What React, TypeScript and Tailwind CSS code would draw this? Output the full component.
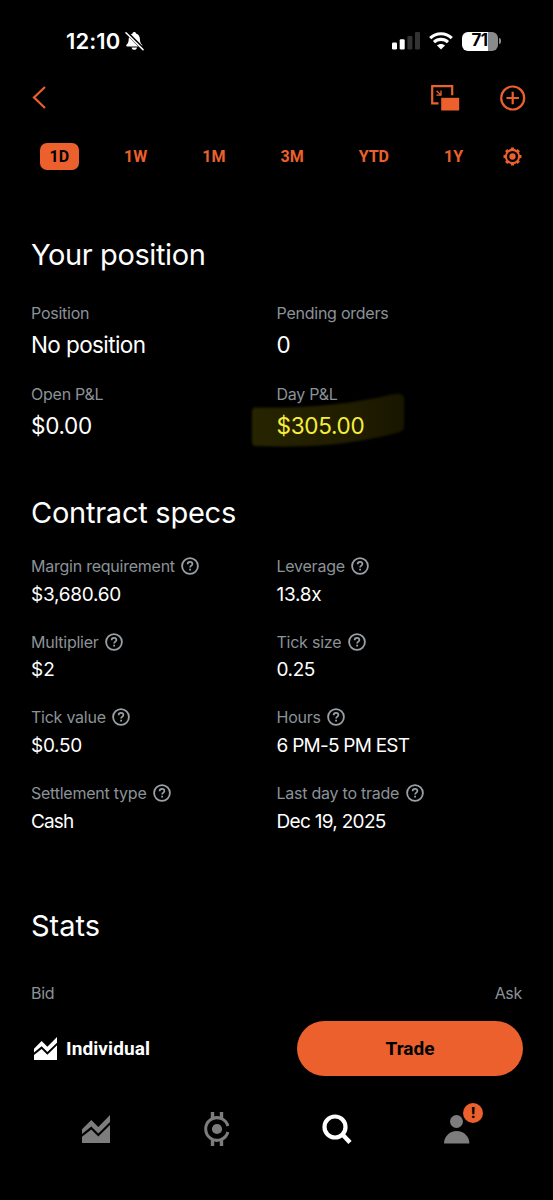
import { clsx } from "clsx";

const ranges = [
  { label: "1D", active: true },
  { label: "1W" },
  { label: "1M" },
  { label: "3M" },
  { label: "YTD" },
  { label: "1Y" },
];

const position = [
  { label: "Position", value: "No position", tracking: "tracking-[-0.6px]" },
  { label: "Pending orders", value: "0" },
  { label: "Open P&L", value: "$0.00", tracking: "tracking-[-0.3px]" },
  { label: "Day P&L", value: "$305.00", tracking: "tracking-[-0.3px]", marked: true },
];

const specs = [
  { label: "Margin requirement", value: "$3,680.60", tracking: "tracking-[-0.25px]" },
  { label: "Leverage", value: "13.8x", tracking: "tracking-[-0.3px]" },
  { label: "Multiplier", value: "$2" },
  { label: "Tick size", value: "0.25", tracking: "tracking-[-0.4px]" },
  { label: "Tick value", value: "$0.50", tracking: "tracking-[-0.3px]" },
  { label: "Hours", value: "6 PM-5 PM EST", tracking: "tracking-[-0.75px]" },
  { label: "Settlement type", value: "Cash", tracking: "tracking-[-0.9px]" },
  { label: "Last day to trade", value: "Dec 19, 2025", tracking: "tracking-[-0.7px]" },
];

function BellOff() {
  return (
    <svg width="19" height="20" viewBox="0 0 19 20" fill="none">
      <path
        d="M9.3 1c-.9 0-1.6.6-1.7 1.4C5.200 3.200 3.700 5.200 3.700 8c0 3.200-.8 4.400-2 5.500-.8.800-.5 2 .6 2h14c1.100 0 1.400-1.200.6-2-1.200-1.100-2-2.300-2-5.500 0-2.800-1.500-4.800-3.900-5.600C10.900 1.600 10.200 1 9.300 1Z"
        fill="#fff"
      />
      <path d="M6.600 16.500h5.400c-.2 1.400-1.300 2.300-2.700 2.300s-2.500-.9-2.700-2.300Z" fill="#fff" />
      <path d="M1.600 1.400 18.400 18.200" stroke="#000" strokeWidth="3.400" />
      <path d="M1 1.800 18 18.600" stroke="#fff" strokeWidth="1.500" strokeLinecap="round" />
    </svg>
  );
}

function Signal() {
  return (
    <svg width="28" height="18" viewBox="0 0 28 18">
      <rect x="0" y="10.500" width="5" height="7" rx="1.200" fill="#fff" />
      <rect x="7.700" y="7.300" width="5" height="10.200" rx="1.200" fill="#fff" />
      <rect x="15.400" y="4" width="5" height="13.500" rx="1.200" fill="#333" />
      <rect x="23" y="0" width="5" height="17.500" rx="1.200" fill="#333" />
    </svg>
  );
}

function Wifi() {
  return (
    <svg width="24" height="18" viewBox="0 0 24 18" fill="none" stroke="#fff" strokeWidth="3.100">
      <path d="M1.200 6.200C7.300.2 16.700.2 22.800 6.200" />
      <path d="M5 10.200c4-3.800 10-3.800 14 0" />
      <path d="M12 17.600 8 13.500c2.300-2 5.700-2 8 0Z" fill="#fff" stroke="none" />
    </svg>
  );
}

function Battery() {
  return (
    <div className="flex items-center gap-[1px]">
      <div className="flex h-[19px] w-[36px] items-center justify-center rounded-[6px] bg-[linear-gradient(90deg,#fff_71%,#8a8a8a_71%)] pr-px text-[17px] font-bold tracking-[-0.6px] text-black">
        71
      </div>
      <div className="h-[6px] w-[2px] rounded-r-full bg-[#8a8a8a]" />
    </div>
  );
}

function Pip() {
  return (
    <svg width="29" height="26" viewBox="0 0 29 26" fill="none" stroke="#eb602c">
      <path d="M7.500 18.300H1.200V1.200h20v9" strokeWidth="2.200" />
      <path d="M5.600 5.800 9.200 9.400M10 5.600v4.600H5.400" strokeWidth="1.300" />
      <path d="M10.200 12.800h18v12.700h-18z" fill="#eb602c" stroke="none" />
    </svg>
  );
}

function Gear() {
  return (
    <svg width="19" height="19" viewBox="0 0 18 18" fill="none" stroke="#eb602c">
      <circle cx="9" cy="9" r="6.300" strokeWidth="2" />
      {[0, 45, 90, 135, 180, 225, 270, 315].map((deg) => (
        <path key={deg} d="M9 2.600V.5" strokeWidth="3" transform={`rotate(${deg} 9 9)`} />
      ))}
      <circle cx="9" cy="9" r="3" fill="#eb602c" stroke="none" />
    </svg>
  );
}

function Help() {
  return (
    <svg width="18" height="18" viewBox="0 0 18 18" fill="none" stroke="#9aa0a6">
      <circle cx="9" cy="9" r="7.900" strokeWidth="1.800" />
      <path d="M6.600 7.300c0-1.500 1-2.400 2.400-2.400s2.400.9 2.400 2.100c0 1.700-2.300 1.700-2.300 3.600" strokeWidth="1.700" />
      <path d="M8.200 11.700h1.800v1.700H8.200z" fill="#9aa0a6" stroke="none" />
    </svg>
  );
}

function ChartIcon({ size, color }: { size: number; color: string }) {
  return (
    <svg width={size} height={size} viewBox="0 0 28 28" fill={color}>
      <path d="M0 14.200 9.300 4.900l7 7L28 0v7L16.300 18.400 9.300 11.400 0 19Z" />
      <path d="M0 21.800 9.300 14.600l7 7L28 10V28H0Z" />
    </svg>
  );
}

function CryptoIcon() {
  return (
    <svg width="26" height="34" viewBox="0 0 26 34" fill="none" stroke="#7d7d7d">
      <path d="M23.900 14A11.300 11.300 0 1 0 23.900 20" strokeWidth="3" />
      <path d="M8.500 0v7M17.500 0v7M8.500 34v-7M17.500 34v-7" strokeWidth="3.400" />
      <circle cx="13" cy="17" r="5.100" fill="#7d7d7d" stroke="none" />
    </svg>
  );
}

type FieldProps = {
  label: string;
  value: string;
  tracking?: string;
  help?: boolean;
  marked?: boolean;
};

function Field({ label, value, tracking, help, marked }: FieldProps) {
  return (
    <div className="relative">
      {/* Highlighter stroke behind the value */}
      {marked && (
        <svg className="absolute top-[8px] left-[-30px] blur-[1px]" width="162" height="60" viewBox="0 0 162 60">
          <defs>
            <linearGradient id="marker" x1="0" x2="1" y1="0" y2="0">
              <stop offset="0" stopColor="#272400" />
              <stop offset="0.6" stopColor="#211e00" />
              <stop offset="1" stopColor="#191600" />
            </linearGradient>
          </defs>
          <path
            d="M9 17.500C60 19 104 14 145 4.500c9-2 12 0 12 5v26c0 5-2 6-8 7.500C108 54 66 58 9 56c-3 0-4-2-4-5V22c0-3 1-4.500 4-4.500Z"
            fill="url(#marker)"
          />
        </svg>
      )}
      <div className="relative flex h-6 items-center gap-[6.500px] text-[16px] tracking-[-0.24px] text-[#8b9298]">
        {label}
        {help && <Help />}
      </div>
      <div
        className={clsx(
          "relative flex items-center",
          help ? "mt-0.5 h-7 pt-0.5 text-[19px]" : "mt-1 h-[30px] pt-px text-[22.500px]",
          marked ? "text-[#f6ee3c]" : "text-white",
          tracking
        )}
      >
        {value}
      </div>
    </div>
  );
}

export default function App() {
  return (
    <div className="flex h-[1200px] w-[553px] flex-col overflow-hidden bg-black font-['Inter',sans-serif] text-white">
      {/* Status bar */}
      <div className="flex h-[82px] shrink-0 items-center pr-[52px] pl-[66px]">
        <span className="text-[22px] font-semibold tracking-[0.1px]">12:10</span>
        <span className="ml-[5px]">
          <BellOff />
        </span>
        <div className="ml-auto flex items-center gap-[9px]">
          <Signal />
          <Wifi />
          <Battery />
        </div>
      </div>

      {/* Header */}
      <div className="flex h-[31px] shrink-0 items-center pr-[27px] pl-8">
        <svg width="14" height="24" viewBox="0 0 14 24" fill="none" stroke="#eb602c" strokeWidth="2.200">
          <path d="M13 1 2 11.500l11 10.500" />
        </svg>
        <div className="ml-auto flex items-center gap-10 pt-px">
          <Pip />
          <svg width="26" height="26" viewBox="0 0 26 26" fill="none" stroke="#eb602c" strokeWidth="2.200">
            <circle cx="12.700" cy="13" r="11.500" />
            <path d="M12.700 6.800v12.400M6.500 13h12.400" />
          </svg>
        </div>
      </div>

      {/* Range picker */}
      <div className="mt-[30px] flex h-[27px] shrink-0 items-center gap-9 pl-10 font-['Roboto'] text-base font-bold text-[#eb602c]">
        {ranges.map((r) => (
          <span
            key={r.label}
            className={clsx("flex h-full items-center rounded-[7px] px-[9.500px] pt-px", r.active && "bg-[#eb602c] text-black")}
          >
            {r.label}
          </span>
        ))}
        <span className="-ml-1.5">
          <Gear />
        </span>
      </div>

      {/* Position */}
      <div className="mt-[65px] shrink-0 px-[31px]">
        <h2 className="flex h-10 items-center text-[29px] tracking-[-0.4px]">Your position</h2>
        <div className="mt-[26px] grid grid-cols-2 gap-y-[23px]">
          {position.map((p) => (
            <Field key={p.label} {...p} />
          ))}
        </div>
      </div>

      {/* Specs */}
      <div className="mt-[53px] shrink-0 px-[31px]">
        <h2 className="flex h-10 items-center text-[29px] tracking-[-0.25px]">Contract specs</h2>
        <div className="mt-[21px] grid grid-cols-2 gap-y-[21.700px]">
          {specs.map((s) => (
            <Field key={s.label} {...s} help />
          ))}
        </div>
      </div>

      {/* Stats */}
      <div className="mt-[71px] shrink-0 px-[31px]">
        <h2 className="flex h-10 items-center text-[29px]">Stats</h2>
        <div className="mt-[35px] flex h-6 items-center justify-between text-[16px] tracking-[-0.3px] text-[#8b9298]">
          <span>Bid</span>
          <span>Ask</span>
        </div>
      </div>

      {/* Account and trade */}
      <div className="mt-4 flex h-[55px] shrink-0 items-center pr-[30px] pl-[34px] font-['Roboto'] text-[19px] font-bold">
        <ChartIcon size={23} color="#fff" />
        <span className="ml-[9px] pt-px tracking-[0.1px]">Individual</span>
        <button className="ml-auto h-full w-[226px] rounded-full bg-[#eb602c] pt-px text-black">Trade</button>
      </div>

      {/* Tab bar */}
      <div className="mt-[29px] flex h-12 shrink-0 items-center pl-[82px]">
        <ChartIcon size={28} color="#7d7d7d" />
        <span className="ml-[94px]">
          <CryptoIcon />
        </span>
        <svg className="ml-[92px]" width="30" height="31" viewBox="0 0 30 31" fill="none" stroke="#fff">
          <circle cx="13" cy="13" r="10.500" strokeWidth="4.200" />
          <path d="M20 20l8 8.500" strokeWidth="4.400" />
        </svg>
        <div className="relative ml-[92px]">
          <svg width="26" height="30" viewBox="0 0 26 30" fill="#7d7d7d">
            <circle cx="12.500" cy="7.500" r="6.500" />
            <path d="M0 29.500c0-7 5.500-12.500 12.700-12.500s12.700 5.500 12.700 12.500Z" />
          </svg>
          <div className="absolute -top-[11px] left-[19px] flex size-5 items-center justify-center rounded-full bg-[#eb602c] font-['Roboto'] text-[15px] font-black text-black ring-2 ring-black">
            !
          </div>
        </div>
      </div>
    </div>
  );
}
